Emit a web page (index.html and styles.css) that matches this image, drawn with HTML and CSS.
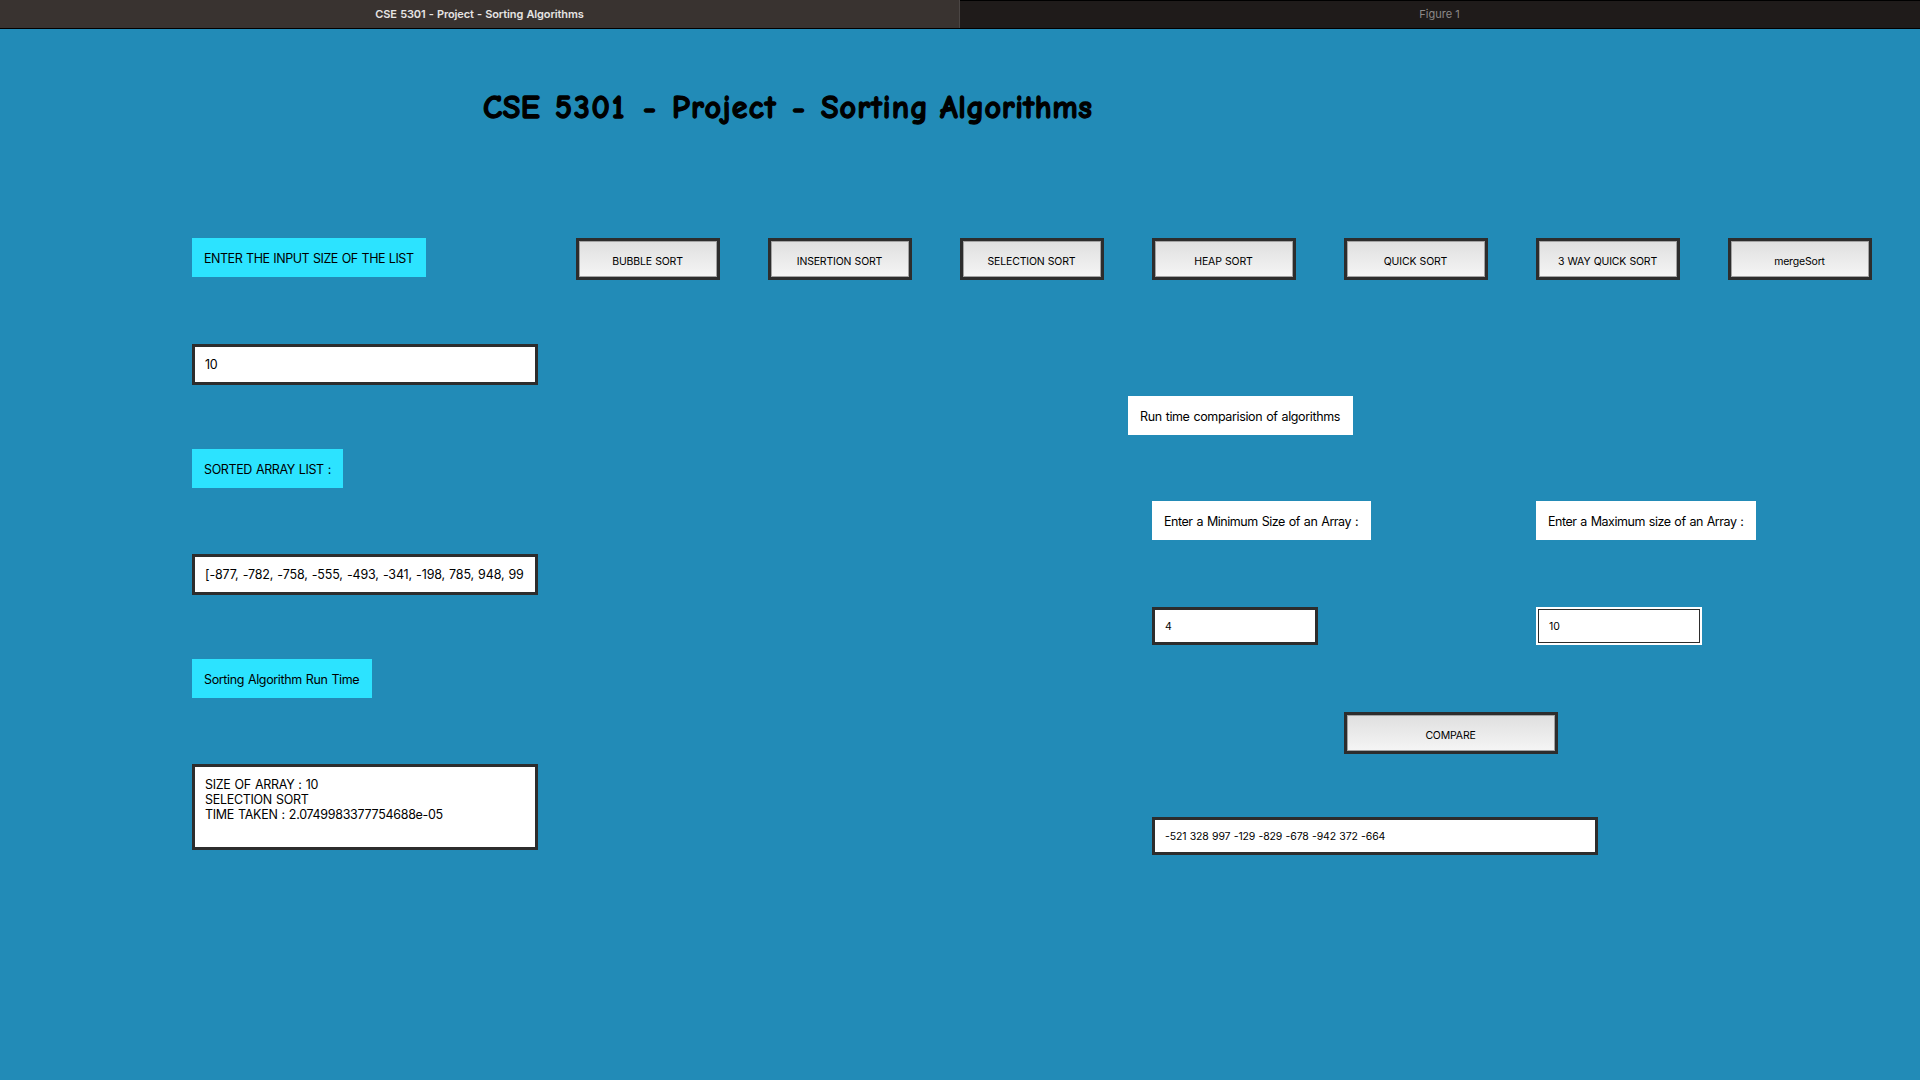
FILE: index.html
```html
<!DOCTYPE html>
<html lang="en">
<head>
<meta charset="utf-8">
<title>CSE 5301 - Project - Sorting Algorithms</title>
<link rel="stylesheet" href="styles.css">
</head>
<body>
<header class="tabs">
  <div class="tab tab-active">CSE 5301 - Project - Sorting Algorithms</div>
  <div class="tab">Figure 1</div>
</header>
<h1 class="title"><span class="w-cse">CSE</span> <span class="w-num">5301</span> <span>-</span> <span class="w-project">Project</span> <span>-</span> <span class="w-sorting">Sorting</span> <span>Algorithms</span></h1>
<main class="content">
  <section class="input-panel">
    <div class="label label-cyan w234">ENTER THE INPUT SIZE OF THE LIST</div>
    <div class="field">10</div>
    <div class="label label-cyan w151">SORTED ARRAY LIST :</div>
    <div class="field numbers">[-877, -782, -758, -555, -493, -341, -198, 785, 948, 99</div>
    <div class="label label-cyan w180">Sorting Algorithm Run Time</div>
    <div class="field output">SIZE OF ARRAY : 10<br>SELECTION SORT<br>TIME TAKEN : 2.0749983377754688e-05</div>
  </section>
  <section class="sort-panel">
    <nav class="buttons">
      <button class="btn">BUBBLE SORT</button>
      <button class="btn">INSERTION SORT</button>
      <button class="btn">SELECTION SORT</button>
      <button class="btn">HEAP SORT</button>
      <button class="btn">QUICK SORT</button>
      <button class="btn">3 WAY QUICK SORT</button>
      <button class="btn">mergeSort</button>
    </nav>
    <div class="compare">
      <div class="label heading w225">Run time comparision of algorithms</div>
      <div class="range">
        <div class="label w219">Enter a Minimum Size of an Array :</div>
        <div class="label w220">Enter a Maximum size of an Array :</div>
        <div class="field small">4</div>
        <div class="field small focused">10</div>
      </div>
      <button class="btn btn-compare">COMPARE</button>
      <div class="field small result">-521 328 997 -129 -829 -678 -942 372 -664</div>
    </div>
  </section>
</main>
</body>
</html>
```
FILE: styles.css
```css
* { box-sizing: border-box; }

body {
  margin: 0;
  height: 1080px;
  overflow: hidden;
  background: #228bb7;
  color: #000;
  font: 12.5px/15px Inter, "Liberation Sans", sans-serif;
  letter-spacing: -0.37px;
  word-spacing: 0.8px;
}

.tabs {
  display: flex;
  height: 29px;
  border-bottom: 1px solid #000;
}

.tab {
  width: 50%;
  padding: 7px 1px 0 0;
  border-top: 1px solid #000;
  background: #1f1b1a;
  color: #8c8988;
  font-size: 11px;
  line-height: 13px;
  letter-spacing: 0.05px;
  word-spacing: 0;
  text-align: center;
}

.tab-active {
  padding: 8px 0 0;
  border-top: 0;
  border-right: 1px solid #4b4644;
  background: #393330;
  color: #e6e4e3;
  font-weight: 600;
  letter-spacing: -0.12px;
  word-spacing: 0.6px;
}

.title {
  display: grid;
  grid-template-columns: 72px 88px 29px 120px 29px 119px auto;
  height: 209px;
  margin: 0;
  padding: 59px 0 0 483px;
  font: 900 32px/40px "Comic Sans MS", "Comic Neue", Lato, sans-serif;
  letter-spacing: 0.6px;
  word-spacing: 0;
  -webkit-text-stroke: 1.3px #000;
}

.w-cse { letter-spacing: 0.5px; }
.w-num { letter-spacing: 1.9px; }
.w-project { letter-spacing: 1.2px; }
.w-sorting { letter-spacing: 1.1px; }

.content {
  display: flex;
  gap: 38px;
  padding-left: 192px;
}

.input-panel {
  display: flex;
  flex-direction: column;
  align-items: flex-start;
  width: 346px;
}

.label {
  height: 39px;
  padding: 13px 12px 0;
  background: #fff;
  white-space: nowrap;
}

.label-cyan { background: #2ce3ff; }

.w151 { width: 151px; letter-spacing: -0.38px; }
.w180 { width: 180px; }
.w219 { width: 219px; letter-spacing: -0.45px; }
.w220 { width: 220px; letter-spacing: -0.47px; }
.w225 { width: 225px; }
.w234 { width: 234px; letter-spacing: -0.47px; }

.field {
  width: 346px;
  height: 41px;
  padding: 10px 10px 0;
  border: 3px solid #2d2d2d;
  background: #fff;
  white-space: nowrap;
  overflow: hidden;
}

.input-panel .field { margin: 67px 0 64px; }
.input-panel .output { height: 86px; margin: 66px 0 0; letter-spacing: -0.3px; }
.input-panel .numbers { margin: 66px 0 64px; letter-spacing: -0.16px; }

.buttons {
  display: flex;
  gap: 48px;
}

.btn {
  display: block;
  width: 144px;
  height: 42px;
  padding: 4px 1px 0 0;
  border: 3px solid #2d2d2d;
  border-radius: 0;
  box-shadow: inset 0 0 0 1px #a3a3a3;
  background: linear-gradient(#dfdfdf, #f5f5f5);
  color: #000;
  font: 10.5px/13px Inter, "Liberation Sans", sans-serif;
  letter-spacing: -0.17px;
  word-spacing: 0.5px;
}

.compare {
  padding: 116px 0 0 576px;
}

.heading { margin-left: -24px; }

.range {
  display: grid;
  grid-template-columns: 384px 384px;
  row-gap: 67px;
  margin-top: 66px;
}

.small {
  width: 166px;
  height: 38px;
  font-size: 10.5px;
  line-height: 13px;
  letter-spacing: -0.13px;
  word-spacing: 0.5px;
}

.focused {
  padding: 11px 12px 0 11px;
  border: 2px solid #fff;
  box-shadow: inset 0 0 0 1px #2d2d2d;
}

.btn-compare {
  width: 214px;
  margin: 67px 0 63px 192px;
}

.result { width: 446px; }
```
